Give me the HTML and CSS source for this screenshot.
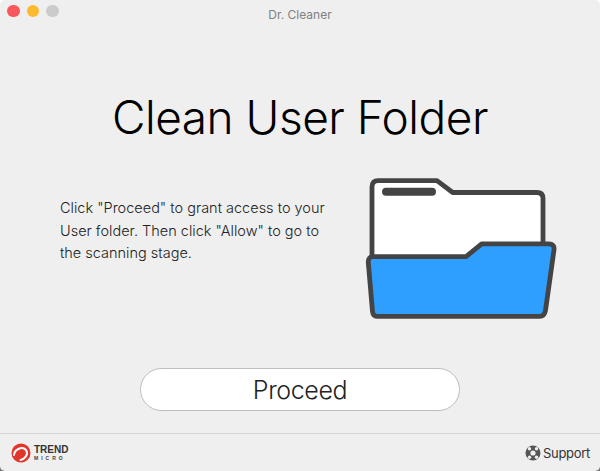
FILE: index.html
```html
<!DOCTYPE html>
<html lang="en">
<head>
<meta charset="utf-8">
<title>Dr. Cleaner</title>
<link rel="stylesheet" href="styles.css">
</head>
<body>
<div class="window">
  <header class="titlebar">
    <div class="lights">
      <span class="light red"></span>
      <span class="light yellow"></span>
      <span class="light grey"></span>
    </div>
    <div class="title">Dr. Cleaner</div>
  </header>
  <main class="main">
    <h1 class="heading">Clean User Folder</h1>
    <div class="row">
      <p class="desc">Click "Proceed" to grant access to your User folder. Then click "Allow" to go to the scanning stage.</p>
      <svg class="folder" width="194" height="144" viewBox="14 12 194 144" aria-hidden="true">
        <path d="M22 95V22q0-6.300 6-6.300h59l15.700 11.800h84.300q6 0 6 6V85" fill="#fff" stroke="#444" stroke-width="4.800" stroke-linejoin="round"/>
        <path d="M36 26.700h46" fill="none" stroke="#444" stroke-width="8" stroke-linecap="round"/>
        <path d="M23 91.700h93l15.700-12.800h67q6 0 5.300 6l-8.500 60.500q-1 6-6 6H28q-5 0-5.500-5L18.300 97.500q-.3-5.800 4.700-5.800z" fill="#2f9fff" stroke="#444" stroke-width="4.800" stroke-linejoin="round"/>
      </svg>
    </div>
    <button class="proceed" type="button">Proceed</button>
  </main>
  <footer class="footer">
    <div class="brand">
      <svg class="brand-mark" width="20" height="20" viewBox="0 0 20 20" aria-hidden="true">
        <circle cx="10" cy="10" r="9.500" fill="#e2352b"/>
        <path d="M3 12C3.500 6 11.500 3 15 7c2.500 3.500 0 8.500-5.500 10" fill="none" stroke="#fff" stroke-width="2" stroke-linecap="round"/>
      </svg>
      <div class="brand-text">
        <span class="brand-trend">TREND</span>
        <span class="brand-micro">MICRO</span>
      </div>
    </div>
    <div class="support">
      <svg class="support-icon" width="16" height="16" viewBox="0 0 16 16" aria-hidden="true">
        <circle cx="8" cy="8" r="7.500" fill="#555"/>
        <circle cx="8" cy="8" r="2.600" fill="#efefef"/>
        <circle cx="4.500" cy="3.800" r="1.700" fill="#efefef"/>
        <circle cx="11.500" cy="3.800" r="1.700" fill="#efefef"/>
        <circle cx="4.500" cy="12.200" r="1.700" fill="#efefef"/>
        <circle cx="11.500" cy="12.200" r="1.700" fill="#efefef"/>
      </svg>
      <span class="support-label">Support</span>
    </div>
  </footer>
</div>
</body>
</html>
```
FILE: styles.css
```css
* { box-sizing: border-box; }
html, body { margin: 0; height: 100%; }
body { background: linear-gradient(#fff 50%, #777 50%); font-family: Inter, "Liberation Sans", sans-serif; color: #111; overflow: hidden; }
.window { width: 600px; height: 471px; display: flex; flex-direction: column; background: #efefef; border-radius: 5px; overflow: hidden; }
.titlebar { height: 22px; flex: none; display: flex; align-items: center; position: relative; padding-left: 7px; }
.lights { display: flex; gap: 7px; }
.light { width: 12.500px; height: 12.500px; border-radius: 50%; }
.red { background: #f8585a; }
.yellow { background: #fcba2e; }
.grey { background: #cbcbcb; }
.title { position: absolute; left: 0; right: 0; top: 0; line-height: 30px; text-align: center; font-size: 12px; color: #808080; }
.main { flex: 1; display: flex; flex-direction: column; align-items: center; min-height: 0; }
.heading { margin: 60px 0 0; font-size: 46px; font-weight: 300; line-height: 70px; letter-spacing: -.5px; color: #000; white-space: nowrap; }
.row { width: 100%; display: flex; justify-content: space-between; padding: 25px 42px 0 60px; }
.desc { margin: 20px 0 0; width: 275px; font-size: 14.500px; line-height: 22.500px; font-weight: 300; color: #222; }
.folder { flex: none; }
.proceed { margin-top: 47px; width: 320px; height: 43px; border: 1px solid #bdbdbd; border-radius: 22px; background: #fff; font: 300 25px Inter, sans-serif; letter-spacing: -.4px; color: #222; padding: 0; }
.footer { height: 38px; flex: none; border-top: 1px solid #d4d4d4; display: flex; align-items: center; justify-content: space-between; padding: 0 10px 0 11px; }
.brand { display: flex; align-items: center; gap: 3px; }
.brand-text { display: flex; flex-direction: column; gap: 2px; }
.brand-trend { font: 700 10px/8px "Liberation Sans", sans-serif; letter-spacing: 0; color: #333; }
.brand-micro { font: 700 5px/4px "Liberation Sans", sans-serif; letter-spacing: 3px; color: #444; }
.support { display: flex; align-items: center; gap: 2px; }
.support-label { font-size: 13px; letter-spacing: -.3px; color: #333; }
```
